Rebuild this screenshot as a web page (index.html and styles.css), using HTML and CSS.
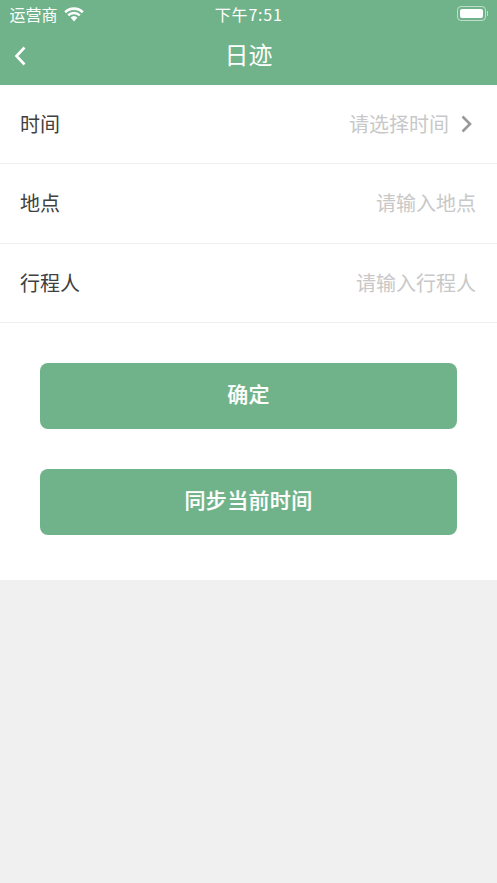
FILE: index.html
```html
<!DOCTYPE html>
<html lang="zh-CN">
<head>
    <meta charset="UTF-8">
    <meta name="viewport" content="width=device-width, initial-scale=1.0">
    <title>日迹</title>
    <link rel="stylesheet" href="styles.css">
</head>
<body>
    <div class="header">
        <div class="status-bar">
            <div class="status-left">
                <span class="carrier">运营商</span>
                <svg class="wifi" width="20" height="15" viewBox="0 0 20 15">
                    <path d="M10 14.4 L6.6 10.6 A5 5 0 0 1 13.4 10.6 Z" fill="#fff"/>
                    <path d="M1.2 5.2 A12.6 12.6 0 0 1 18.8 5.2" fill="none" stroke="#fff" stroke-width="2.6"/>
                    <path d="M4.2 8.3 A8.4 8.4 0 0 1 15.8 8.3" fill="none" stroke="#fff" stroke-width="2.4"/>
                </svg>
            </div>
            <span class="clock">下午7:51</span>
            <div class="battery">
                <div class="battery-body"><div class="battery-level"></div></div>
                <div class="battery-cap"></div>
            </div>
        </div>
        <div class="nav-bar">
            <svg class="back" width="14" height="22" viewBox="0 0 14 22">
                <path d="M11.5 2.5 L3.5 11 L11.5 19.5" fill="none" stroke="#fff" stroke-width="2.6"/>
            </svg>
            <h1 class="nav-title">日迹</h1>
        </div>
    </div>

    <div class="panel">
        <div class="form-row">
            <span class="row-label">时间</span>
            <div class="row-value">
                <span>请选择时间</span>
                <svg class="arrow" width="14" height="20" viewBox="0 0 14 20">
                    <path d="M3.5 2.5 L11 10 L3.5 17.5" fill="none" stroke="#999" stroke-width="2.6"/>
                </svg>
            </div>
        </div>
        <div class="form-row">
            <span class="row-label">地点</span>
            <div class="row-value"><span>请输入地点</span></div>
        </div>
        <div class="form-row">
            <span class="row-label">行程人</span>
            <div class="row-value"><span>请输入行程人</span></div>
        </div>

        <div class="actions">
            <button class="action-button">确定</button>
            <button class="action-button">同步当前时间</button>
        </div>
    </div>
</body>
</html>
```

FILE: styles.css
```css
* {
    box-sizing: border-box;
}
body {
    margin: 0;
    height: 883px;
    overflow: hidden;
    background-color: #f0f0f0;
    font-family: "Noto Sans CJK SC", "Liberation Sans", sans-serif;
    color: #333;
}

/* Encabezado verde */
.header {
    height: 85px;
    background-color: #70b38a;
    color: #fff;
}
.status-bar {
    height: 29px;
    display: flex;
    align-items: center;
    justify-content: space-between;
    padding: 0 9px 1px 9.5px;
}
.status-left {
    width: 165px;
    display: flex;
    align-items: center;
    gap: 6px;
}
.carrier {
    font-size: 16px;
}
.clock {
    font-size: 16px;
    letter-spacing: 0.8px;
}
.battery {
    width: 165px;
    margin-bottom: 1px;
    display: flex;
    align-items: center;
    justify-content: flex-end;
}
.battery-body {
    width: 29px;
    height: 15px;
    padding: 2px;
    border: 1px solid rgba(255, 255, 255, 0.55);
    border-radius: 4px;
}
.battery-level {
    height: 100%;
    background-color: #fff;
    border-radius: 2px;
}
.battery-cap {
    width: 1px;
    height: 5px;
    margin-left: 1px;
    background-color: rgba(255, 255, 255, 0.55);
}
.nav-bar {
    height: 56px;
    padding-bottom: 6px;
    display: flex;
    align-items: center;
    justify-content: center;
    position: relative;
}
.back {
    position: absolute;
    left: 13px;
    top: 16px;
}
.nav-title {
    margin: 0;
    font-size: 24px;
    font-weight: 400;
    line-height: 1;
}

/* Formulario */
.panel {
    height: 495px;
    background-color: #fff;
}
.form-row {
    height: 79.33px;
    padding: 0 21px 1px 20px;
    display: flex;
    align-items: center;
    justify-content: space-between;
    border-bottom: 1px solid #f0f0f0;
}
.row-label {
    font-size: 20px;
    color: #404040;
}
.row-value {
    display: flex;
    align-items: center;
    gap: 10px;
    font-size: 20px;
    color: #c8c8c8;
}
.arrow {
    margin-right: 3px;
}

.actions {
    padding: 40px 40px 0;
    display: flex;
    flex-direction: column;
    gap: 40px;
}
.action-button {
    height: 66px;
    padding: 0 0 5px;
    border: none;
    border-radius: 8px;
    background-color: #70b38a;
    color: #fff;
    font-family: inherit;
    font-size: 21px;
    font-weight: 500;
    letter-spacing: 0.35px;
    -webkit-text-stroke: 0.2px #fff;
}
```
